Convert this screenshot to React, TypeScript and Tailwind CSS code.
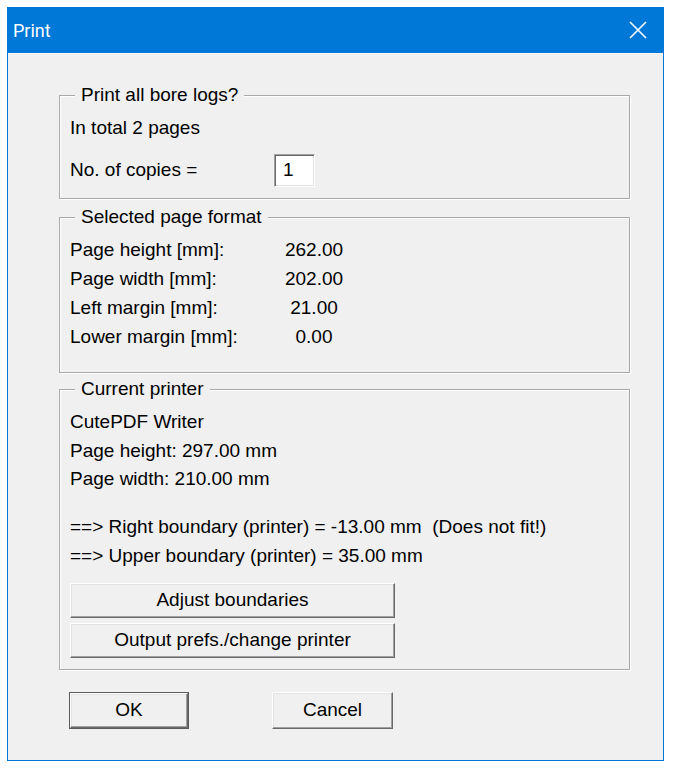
import React from "react";

const font = { fontFamily: '"Liberation Sans", Arial, sans-serif' };

function Group({
  title,
  className,
  children,
}: {
  title: string;
  className: string;
  children: React.ReactNode;
}) {
  return (
    <div
      className={`relative box-border border border-[#a9a9a9] shadow-[inset_1px_1px_0_#ffffff,1px_1px_0_#ffffff] ${className}`}
    >
      <span className="absolute left-[15px] -top-[13px] bg-[#f0f0f0] px-[6px] leading-[24px]">
        {title}
      </span>
      {children}
    </div>
  );
}

function Button({
  label,
  className,
  isDefault,
}: {
  label: string;
  className: string;
  isDefault?: boolean;
}) {
  const face =
    "box-border flex items-center justify-center bg-[#f0f0f0] border border-t-white border-l-white border-b-[#696969] border-r-[#696969] shadow-[inset_-1px_-1px_0_#a0a0a0,inset_1px_1px_0_#e3e3e3]";
  if (isDefault) {
    return (
      <div className={`box-border border border-[#5a5a5a] ${className}`}>
        <div className={`${face} h-full w-full`}>{label}</div>
      </div>
    );
  }
  return <div className={`${face} ${className}`}>{label}</div>;
}

export default function App() {
  return (
    <div className="min-h-[769px] w-[687px] bg-white pl-[7px] pt-[7px]" style={font}>
      <div className="box-border flex h-[754px] w-[657px] flex-col border border-[#0078d7] bg-[#0078d7]">
        {/* title bar */}
        <div className="flex h-[45px] shrink-0 items-center justify-between pl-[5px] pr-[16px]">
          <span
            className="text-[18px] text-white"
            style={{ fontFamily: 'Roboto, "Noto Sans", sans-serif' }}
          >
            Print
          </span>
          <svg width="18" height="18" viewBox="0 0 18 18" className="mb-[1px]">
            <path d="M1 1 L17 17 M17 1 L1 17" stroke="#ffffff" strokeWidth="1.6" fill="none" />
          </svg>
        </div>

        {/* client area */}
        <div className="box-border flex flex-1 flex-col border-t border-[#fafafa] bg-[#f0f0f0] pl-[51px] pr-[33px] text-[19px] text-black">
          <Group title="Print all bore logs?" className="mt-[41px] h-[104px] pl-[10px] pt-[20px]">
            <div className="h-[24px] leading-[24px]">In total 2 pages</div>
            <div className="mt-[14px] flex h-[33px] items-center">
              <span className="w-[204px]">No. of copies =</span>
              <div className="box-border flex h-[33px] w-[41px] items-center border border-t-[#a0a0a0] border-l-[#a0a0a0] border-b-white border-r-white bg-white pl-[8px] shadow-[inset_1px_1px_0_#696969,inset_-1px_-1px_0_#e3e3e3]">
                1
              </div>
            </div>
          </Group>

          <Group title="Selected page format" className="mt-[18px] h-[156px] pl-[10px] pt-[18px]">
            {[
              ["Page height [mm]:", "262.00"],
              ["Page width [mm]:", "202.00"],
              ["Left margin [mm]:", "21.00"],
              ["Lower margin [mm]:", "0.00"],
            ].map(([k, v]) => (
              <div key={k} className="flex h-[29px] items-center">
                <span className="w-[200px]">{k}</span>
                <span className="w-[88px] text-center">{v}</span>
              </div>
            ))}
          </Group>

          <Group title="Current printer" className="mt-[16px] h-[281px] pl-[10px] pt-[18px]">
            <div className="flex h-[28.5px] items-center">CutePDF Writer</div>
            <div className="flex h-[28.5px] items-center">Page height: 297.00 mm</div>
            <div className="flex h-[28.5px] items-center">Page width: 210.00 mm</div>
            <div className="mt-[19.5px] flex h-[28.5px] items-center whitespace-pre">
              {"==> Right boundary (printer) = -13.00 mm  (Does not fit!)"}
            </div>
            <div className="flex h-[28.5px] items-center">
              {"==> Upper boundary (printer) = 35.00 mm"}
            </div>
            <Button label="Adjust boundaries" className="mt-[13px] h-[35px] w-[325px]" />
            <Button label="Output prefs./change printer" className="mt-[5px] h-[35px] w-[325px]" />
          </Group>

          <div className="mt-[22px] flex pl-[10px]">
            <Button label="OK" isDefault className="h-[37px] w-[120px]" />
            <Button label="Cancel" className="ml-[83px] h-[37px] w-[121px]" />
          </div>
        </div>
      </div>
    </div>
  );
}
